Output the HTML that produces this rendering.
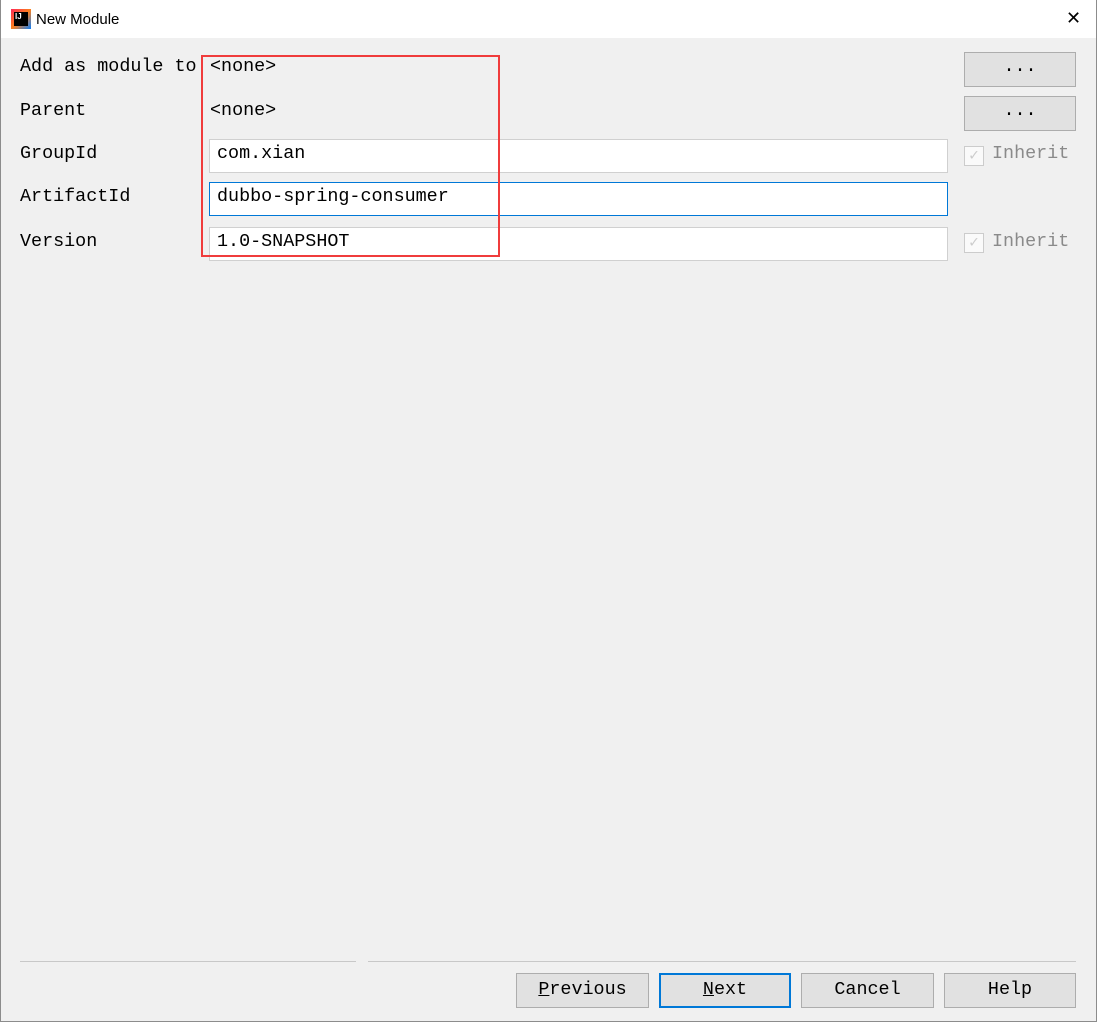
<!DOCTYPE html><html><head><style>
body{margin:0;width:1097px;height:1022px;background:#f0f0f0;position:relative;overflow:hidden;font-family:"Liberation Mono",monospace;font-size:18.4px;color:#000}
div,span{position:absolute;box-sizing:border-box}
.t{white-space:pre;line-height:20px}
.in{background:#fff;border:1px solid #d0d0d0;height:34px;left:209px;width:739px}
.btn{background:#e1e1e1;border:1px solid #adadad;height:35px;text-align:center;line-height:32px}
.cb{width:20px;height:20px;border:1px solid #ccc;background:#fafafa;left:964px}
.g{color:#8a8a8a}
</style></head><body>
<div style="left:0;top:0;width:1097px;height:38px;background:#fff"></div>
<div style="left:0;top:0;width:1097px;height:1022px;border:1px solid #8c8c8c;border-top:none"></div>
<div style="left:11px;top:9px;width:20px;height:20px;background:linear-gradient(135deg,#fe2857,#fc801d 50%,#087cfa)"></div>
<div style="left:14px;top:12px;width:14px;height:14px;background:#000;color:#fff;font:bold 8px 'Liberation Sans';line-height:9px;padding-left:1px">IJ</div>
<div class="t" style="left:36px;top:10px;font:15px 'Liberation Sans',sans-serif;line-height:20px">New Module</div>
<div class="t" style="left:1066px;top:8px;font:18px 'DejaVu Sans',sans-serif;font-weight:200">✕</div>
<div class="t" style="left:20px;top:57px">Add as module to</div>
<div class="t" style="left:210px;top:57px">&lt;none&gt;</div>
<div class="t" style="left:20px;top:101px">Parent</div>
<div class="t" style="left:210px;top:101px">&lt;none&gt;</div>
<div class="t" style="left:20px;top:144px">GroupId</div>
<div class="t" style="left:20px;top:187px">ArtifactId</div>
<div class="t" style="left:20px;top:232px">Version</div>
<div class="in" style="top:139px"></div>
<div class="in" style="top:182px;border-color:#0078d7"></div>
<div class="in" style="top:227px"></div>
<div class="t" style="left:217px;top:144px">com.xian</div>
<div class="t" style="left:217px;top:187px">dubbo-spring-consumer</div>
<div class="t" style="left:217px;top:232px">1.0-SNAPSHOT</div>
<div class="btn" style="left:964px;top:52px;width:112px;line-height:28px">...</div>
<div class="btn" style="left:964px;top:96px;width:112px;line-height:28px">...</div>
<div class="cb" style="top:146px;color:#ccc;font-size:16px;line-height:18px;text-align:center">✓</div>
<div class="cb" style="top:233px;color:#ccc;font-size:16px;line-height:18px;text-align:center">✓</div>
<div class="t g" style="left:992px;top:144px">Inherit</div>
<div class="t g" style="left:992px;top:232px">Inherit</div>
<div style="left:201px;top:55px;width:299px;height:202px;border:2px solid #f03c3c"></div>
<div style="left:20px;top:961px;width:336px;height:1px;background:#c8c8c8"></div>
<div style="left:368px;top:961px;width:708px;height:1px;background:#c8c8c8"></div>
<div class="btn" style="left:516px;top:973px;width:133px"><u>P</u>revious</div>
<div class="btn" style="left:659px;top:973px;width:132px;border:2px solid #0078d7;line-height:30px"><u>N</u>ext</div>
<div class="btn" style="left:801px;top:973px;width:133px">Cancel</div>
<div class="btn" style="left:944px;top:973px;width:132px">Help</div>
</body></html>
